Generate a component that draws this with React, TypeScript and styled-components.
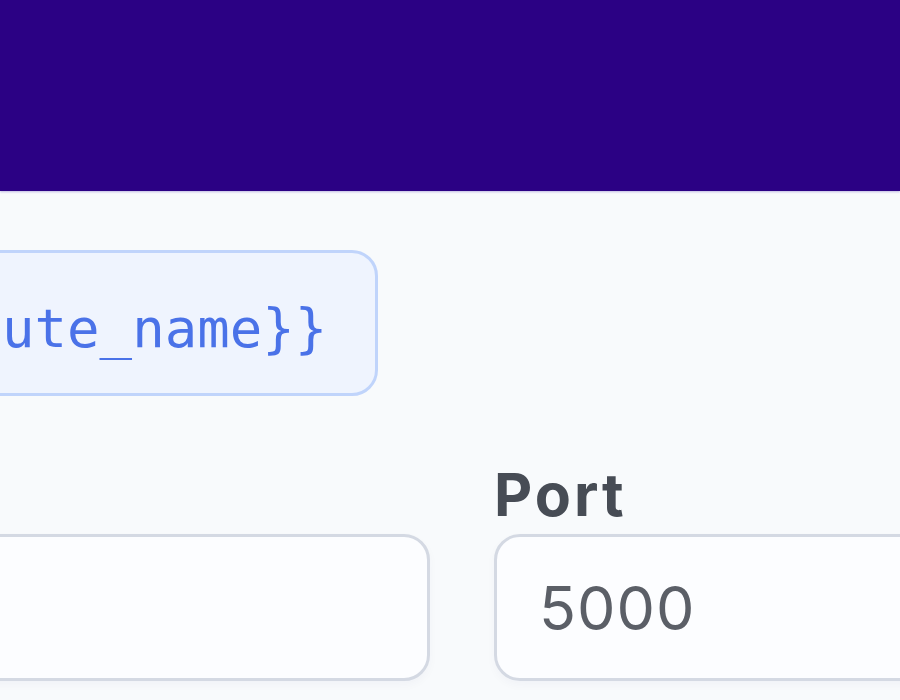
import React from "react";
import styled, { createGlobalStyle } from "styled-components";

const Global = createGlobalStyle`
  html, body {
    margin: 0;
    padding: 0;
    background: #f8fafc;
    overflow: hidden;
  }
  #root {
    width: 900px;
    height: 700px;
    overflow: hidden;
  }
`;

const Page = styled.div`
  width: 900px;
  height: 700px;
  overflow: hidden;
  background: #f8fafc;
  display: flex;
  flex-direction: column;
`;

const Header = styled.header`
  flex: 0 0 191px;
  background: #2b0184;
  box-shadow: 0 1px 2px rgba(90, 70, 180, 0.35);
`;

const Main = styled.main`
  margin-left: -400px;
  width: 1800px;
  padding-top: 59px;
  display: flex;
  flex-direction: column;
  align-items: flex-start;
`;

const Chip = styled.code`
  margin-left: 91px;
  display: inline-flex;
  align-items: center;
  box-sizing: border-box;
  height: 146px;
  padding: 10px 48px 0 48px;
  border: 3px solid #c0d4fb;
  border-radius: 26px;
  background: #eff4fe;
  color: #4a72e8;
  font-family: "DejaVu Sans Mono", monospace;
  font-size: 54px;
  white-space: nowrap;
`;

const Form = styled.div`
  margin-top: 67px;
  display: grid;
  grid-template-columns: 830px 830px;
  column-gap: 64px;
`;

const Field = styled.label`
  display: flex;
  flex-direction: column;
  gap: 6px;
`;

const Label = styled.span`
  font-family: Inter, "Noto Sans", sans-serif;
  font-weight: 700;
  font-size: 59px;
  line-height: 1.1;
  letter-spacing: 3px;
  color: #474c55;
`;

const Input = styled.div`
  box-sizing: border-box;
  height: 147px;
  display: flex;
  align-items: center;
  padding: 2px 42px 0 42px;
  border: 3px solid #d4d9e3;
  border-radius: 26px;
  background: #fcfdff;
  box-shadow: 0 4px 10px rgba(30, 40, 80, 0.03);
  font-family: Inter, "Noto Sans", sans-serif;
  font-size: 61px;
  letter-spacing: 1px;
  color: #5b5f67;
`;

export default function App() {
  return (
    <>
      <Global />
      <Page>
        <Header />
        <Main>
          <Chip>{"{{attribute_name}}"}</Chip>
          <Form>
            <Field>
              <Label>Host</Label>
              <Input />
            </Field>
            <Field>
              <Label>Port</Label>
              <Input>5000</Input>
            </Field>
          </Form>
        </Main>
      </Page>
    </>
  );
}
